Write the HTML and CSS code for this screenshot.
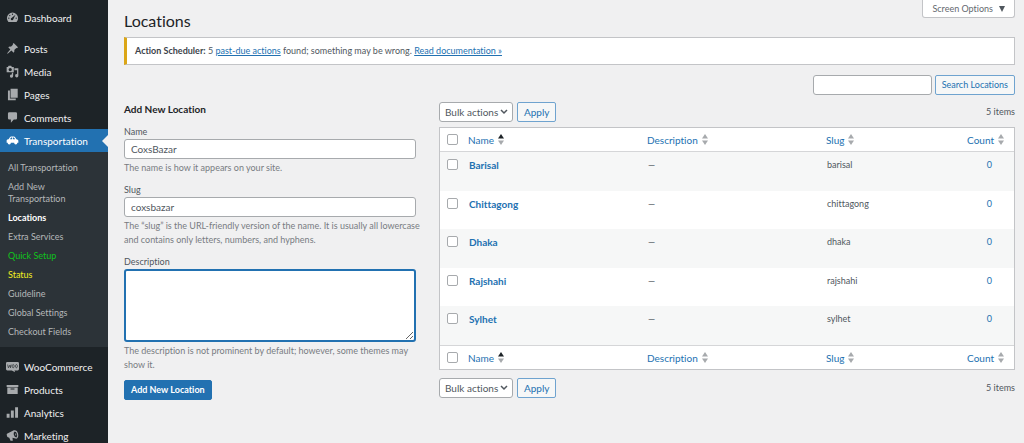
FILE: index.html
```html
<!DOCTYPE html>
<html lang="en">
<head>
<meta charset="utf-8">
<title>Locations</title>
<link rel="stylesheet" href="styles.css">
</head>
<body>
<svg class="defs" aria-hidden="true">
  <symbol id="sort" viewBox="0 0 6 11"><path d="M3 0 6 4.500H0z"/><path d="M0 6.500H6L3 11z"/></symbol>
  <symbol id="sort-asc" viewBox="0 0 6 11"><path fill="#1d2327" d="M3 0 6 4.500H0z"/><path d="M0 6.500H6L3 11z"/></symbol>
</svg>
<div class="layout">
  <nav class="sidebar" aria-label="Main menu">
    <ul class="menu">
      <li><a class="item" href="#"><svg class="icon" viewBox="0 0 20 20"><path fill-rule="evenodd" d="M3.800 17a8.600 8.600 0 1 1 12.400 0zM10 4a1 1 0 1 0 0 2 1 1 0 0 0 0-2zM5.800 6a1 1 0 1 0 0 2 1 1 0 0 0 0-2zm8.800-.3L9 10.300a2 2 0 1 0 2.300 2.300zM4.300 10a1 1 0 1 0 0 2 1 1 0 0 0 0-2zm11.400 0a1 1 0 1 0 0 2 1 1 0 0 0 0-2z"/></svg>Dashboard</a></li>
      <li class="spaced"><a class="item" href="#"><svg class="icon" viewBox="0 0 20 20"><path d="M10.400 3 11.800 1.600 18.400 8.200 17 9.600l-1.100-.4-3.200 3.200c.5 1.600.2 2.900-.9 4l-3.500-3.500L2.600 18l-.8-.8 4.800-5.600L3.500 8.200c1.100-1.100 2.400-1.400 4-.9l3.200-3.200z"/></svg>Posts</a></li>
      <li><a class="item" href="#"><svg class="icon" viewBox="0 0 20 20"><path fill-rule="evenodd" d="M1 3h2l1-2h4l1 2h3v8H1zm5.500 1.500a2.500 2.500 0 1 0 0 5 2.500 2.500 0 0 0 0-5zM13 5h6v11.500a2.500 2.500 0 1 1-2-2.400V8h-4zM9 12h2v5a2.500 2.500 0 1 1-2-2.400z"/></svg>Media</a></li>
      <li><a class="item" href="#"><svg class="icon" viewBox="0 0 20 20"><path d="M7 1h11v14H7zM3 4h3v12h9v3H3z"/></svg>Pages</a></li>
      <li><a class="item" href="#"><svg class="icon" viewBox="0 0 20 20"><path d="M5 2h10q2 0 2 2v7q0 2-2 2h-3l-4.500 5v-5H5q-2 0-2-2V4q0-2 2-2z"/></svg>Comments</a></li>
      <li>
        <a class="item current" href="#"><svg class="icon" viewBox="0 0 20 20"><path fill-rule="evenodd" d="M1 9.500q.5-1.500 3-1.500l2-3q.6-1 2-1h4q1.400 0 2 1l2 3q2.600.3 3 2v3.500h-1.500a2.500 2.500 0 0 1-5 0h-5a2.500 2.500 0 0 1-5 0H1zM6.200 8h3.300V5.500H8q-.5 0-.8.500zm4.500 0h3.300l-1.200-2q-.3-.5-.8-.5h-1.300z"/></svg>Transportation</a>
        <ul class="submenu">
          <li><a href="#">All Transportation</a></li>
          <li><a href="#">Add New Transportation</a></li>
          <li><a class="active" href="#">Locations</a></li>
          <li><a href="#">Extra Services</a></li>
          <li><a class="setup" href="#">Quick Setup</a></li>
          <li><a class="status" href="#">Status</a></li>
          <li><a href="#">Guideline</a></li>
          <li><a href="#">Global Settings</a></li>
          <li><a href="#">Checkout Fields</a></li>
        </ul>
      </li>
      <li class="spaced"><a class="item" href="#"><svg class="icon" viewBox="0 0 20 20"><path d="M2 3h16q2 0 2 2v9q0 2-2 2h-5l1 3-5-3H2q-2 0-2-2V5q0-2 2-2z"/><path class="woo" d="m2.500 7 1.200 5L6 8l.9 4L8 7m3 0a1.500 2.500 0 1 0 .1 0zm5 0a1.500 2.500 0 1 0 .1 0z"/></svg>WooCommerce</a></li>
      <li><a class="item" href="#"><svg class="icon" viewBox="0 0 20 20"><path fill-rule="evenodd" d="M1 3h18v3H1zM2 7h16v10H2zm5 1.500V10h6V8.500z"/></svg>Products</a></li>
      <li><a class="item" href="#"><svg class="icon" viewBox="0 0 20 20"><path d="M1 12h4.500v6H1zM7.500 7H12v11H7.500zM14 2h4.500v16H14z"/></svg>Analytics</a></li>
      <li><a class="item" href="#"><svg class="icon" viewBox="0 0 20 20"><path fill-rule="evenodd" d="M1 9q0-2 2-2.500L12 2q5-1 6.500 5T16 15l-6-1.500.5 4.500H7l-2-4.500Q1 13 1 9zm12.500-5Q11 5 12 9t4 4q2-1 1-5t-3.500-4zm.3 3q1.800 0 2 1.500T15 10.500z"/></svg>Marketing</a></li>
    </ul>
  </nav>

  <main class="content">
    <header class="top">
      <h1>Locations</h1>
      <button class="screen-options" type="button">Screen Options <svg class="caret" viewBox="0 0 6 6"><path d="M0 0h6L3 6z"/></svg></button>
    </header>

    <p class="notice"><strong>Action Scheduler:</strong> 5 <a href="#">past-due actions</a> found; something may be wrong. <a href="#">Read documentation »</a></p>

    <form class="search">
      <input class="field" type="search" aria-label="Search Locations">
      <button class="button small" type="button">Search Locations</button>
    </form>

    <div class="columns">
      <form class="add-form">
        <h2>Add New Location</h2>
        <div class="group">
          <label for="name">Name</label>
          <input class="field" id="name" type="text" value="CoxsBazar">
          <p>The name is how it appears on your site.</p>
        </div>
        <div class="group">
          <label for="slug">Slug</label>
          <input class="field" id="slug" type="text" value="coxsbazar">
          <p>The “slug” is the URL-friendly version of the name. It is usually all lowercase and contains only letters, numbers, and hyphens.</p>
        </div>
        <div class="group">
          <label for="description">Description</label>
          <textarea class="field focused" id="description"></textarea>
          <p>The description is not prominent by default; however, some themes may show it.</p>
        </div>
        <button class="button primary" type="button">Add New Location</button>
      </form>

      <section class="list">
        <div class="tablenav">
          <select aria-label="Bulk actions"><option>Bulk actions</option></select>
          <button class="button" type="button">Apply</button>
          <span class="total">5 items</span>
        </div>
        <table>
          <thead>
            <tr>
              <td class="check"><input type="checkbox" aria-label="Select all"></td>
              <th class="name"><a href="#">Name<svg class="sort"><use href="#sort-asc"/></svg></a></th>
              <th class="desc"><a href="#">Description<svg class="sort"><use href="#sort"/></svg></a></th>
              <th class="slug"><a href="#">Slug<svg class="sort"><use href="#sort"/></svg></a></th>
              <th class="count"><a href="#">Count<svg class="sort"><use href="#sort"/></svg></a></th>
            </tr>
          </thead>
          <tbody>
            <tr><td class="check"><input type="checkbox" aria-label="Select Barisal"></td><td><a class="title" href="#">Barisal</a></td><td>—</td><td>barisal</td><td class="count"><a href="#">0</a></td></tr>
            <tr><td class="check"><input type="checkbox" aria-label="Select Chittagong"></td><td><a class="title" href="#">Chittagong</a></td><td>—</td><td>chittagong</td><td class="count"><a href="#">0</a></td></tr>
            <tr><td class="check"><input type="checkbox" aria-label="Select Dhaka"></td><td><a class="title" href="#">Dhaka</a></td><td>—</td><td>dhaka</td><td class="count"><a href="#">0</a></td></tr>
            <tr><td class="check"><input type="checkbox" aria-label="Select Rajshahi"></td><td><a class="title" href="#">Rajshahi</a></td><td>—</td><td>rajshahi</td><td class="count"><a href="#">0</a></td></tr>
            <tr><td class="check"><input type="checkbox" aria-label="Select Sylhet"></td><td><a class="title" href="#">Sylhet</a></td><td>—</td><td>sylhet</td><td class="count"><a href="#">0</a></td></tr>
          </tbody>
          <tfoot>
            <tr>
              <td class="check"><input type="checkbox" aria-label="Select all"></td>
              <th><a href="#">Name<svg class="sort"><use href="#sort-asc"/></svg></a></th>
              <th><a href="#">Description<svg class="sort"><use href="#sort"/></svg></a></th>
              <th><a href="#">Slug<svg class="sort"><use href="#sort"/></svg></a></th>
              <th class="count"><a href="#">Count<svg class="sort"><use href="#sort"/></svg></a></th>
            </tr>
          </tfoot>
        </table>
        <div class="tablenav">
          <select aria-label="Bulk actions"><option>Bulk actions</option></select>
          <button class="button" type="button">Apply</button>
          <span class="total">5 items</span>
        </div>
      </section>
    </div>
  </main>
</div>
</body>
</html>
```
FILE: styles.css
```css
* { box-sizing: border-box; }
body {
  margin: 0;
  background: #f0f0f1;
  color: #50575e;
  font: 10px/14px Lato, "Open Sans", sans-serif;
  font-variant-ligatures: none;
}
h1, h2, p, ul { margin: 0; padding: 0; }
ul { list-style: none; }
a { color: #2271b1; }
input, select, textarea, button { font: inherit; color: inherit; margin: 0; }
.defs { display: none; }

.layout { display: flex; height: 100vh; overflow: hidden; }

/* Sidebar */
.sidebar { flex: 0 0 108px; background: #1d2327; }
.menu { padding-top: 6px; }
.spaced { margin-top: 8px; }
.item {
  display: flex;
  align-items: center;
  gap: 5px;
  height: 23px;
  padding-left: 6px;
  color: #f0f0f1;
  font-size: 10px;
  text-decoration: none;
}
.icon { width: 13px; height: 13px; fill: #a7aaad; }
.woo { fill: none; stroke: #1d2327; stroke-width: 1; }
.current { position: relative; background: #2271b1; color: #fff; }
.current .icon { fill: #fff; }
.current::after {
  content: "";
  position: absolute;
  right: 0;
  top: 6px;
  border: 6px solid transparent;
  border-left: 0;
  border-right-color: #f0f0f1;
}
.submenu { background: #2c3338; padding: 6px 0; }
.submenu a {
  display: block;
  padding: 4px 8px 3px;
  color: #b5b8ba;
  font-size: 9px;
  line-height: 12px;
  text-decoration: none;
}
.submenu .active { color: #fff; font-weight: 700; }
.submenu .setup { color: #10c41c; }
.submenu .status { color: #f2ee22; }

/* Content */
.content { flex: 1; min-width: 0; padding: 0 9px 0 16px; }
.top { display: flex; justify-content: space-between; align-items: flex-start; height: 37px; }
h1 { padding-top: 10px; color: #1d2327; font-size: 16px; line-height: 22px; font-weight: 400; }
.screen-options {
  display: flex;
  align-items: center;
  gap: 6px;
  height: 18px;
  padding: 0 9px;
  border: 1px solid #c3c4c7;
  border-top: 0;
  border-radius: 0 0 3px 3px;
  background: #fff;
  color: #646970;
  font-size: 9px;
}
.caret { width: 6px; height: 6px; fill: #50575e; }
.notice {
  padding: 6px 8px;
  border: 1px solid #c3c4c7;
  border-left: 3px solid #dba617;
  background: #fff;
  font-size: 9px;
}
.notice strong { color: #3c434a; font-weight: 700; }
.search { display: flex; justify-content: flex-end; gap: 3px; margin-top: 10px; }
.search .field { width: 119px; }

.field {
  display: block;
  width: 100%;
  height: 20px;
  padding: 0 6px;
  border: 1px solid #a7aaad;
  border-radius: 3px;
  background: #fff;
  outline: 0;
}
.button {
  height: 20px;
  padding: 0 6px;
  border: 1px solid #6fa3cf;
  border-radius: 2px;
  background: #f6f7f7;
  color: #2271b1;
  white-space: nowrap;
}
.small { font-size: 9px; }
.primary { border-color: #2271b1; background: #2271b1; color: #fff; font-size: 9px; font-weight: 700; }

.columns { display: flex; gap: 23px; margin-top: 7px; }
.add-form { flex: 0 1 292px; }
h2 { color: #1d2327; font-size: 10px; line-height: 14px; font-weight: 700; }
.group { display: flow-root; margin-bottom: 8px; font-size: 9px; }
h2 + .group { margin-top: 9px; }
.group label { display: block; }
.group .field { font-size: 10px; }
.group p { margin: 2px -6px 0 0; color: #787c82; }
.group textarea { height: 73px; resize: vertical; }
.group .focused { border: 2px solid #2271b1; }

/* Locations table */
.list { flex: 1; min-width: 0; }
.tablenav { display: flex; align-items: center; gap: 4px; }
select {
  width: 74px;
  height: 20px;
  padding: 0 5px;
  border: 1px solid #a7aaad;
  border-radius: 3px;
  appearance: none;
  background: #fff url("data:image/svg+xml,%3Csvg xmlns='http://www.w3.org/2000/svg' viewBox='0 0 8 6'%3E%3Cpath d='m1 1 3 3 3-3' fill='none' stroke='%2350575e' stroke-width='1.500'/%3E%3C/svg%3E") no-repeat right 4px center / 8px 6px;
}
.total { margin-left: auto; font-size: 9px; }
table {
  width: 100%;
  margin: 5px 0 8px;
  border: 1px solid #c3c4c7;
  border-spacing: 0;
  table-layout: fixed;
  background: #fff;
}
th, td { padding: 0 6px; text-align: left; font-weight: 400; }
th a, td a { text-decoration: none; }
thead tr, tfoot tr { height: 24px; }
thead th, thead td { border-bottom: 1px solid #d5d6d8; }
tfoot th, tfoot td { border-top: 1px solid #d5d6d8; }
tbody tr { height: 38px; }
tbody tr:nth-child(odd) { height: 39px; background: #f6f7f7; }
tbody td { padding: 6px 7px; vertical-align: top; font-size: 9px; }
.title { font-size: 10px; font-weight: 700; }
.check, tbody .check { width: 22px; padding: 0 0 0 7px; }
tbody .check { padding-top: 7px; }
.desc, .name { width: 179px; }
.count { width: 75px; text-align: right; padding-right: 10px; }
tbody .count { padding-right: 22px; }
.sort { width: 6px; height: 11px; margin-left: 4px; fill: #a7aaad; vertical-align: -1px; }
input[type="checkbox"] {
  display: block;
  width: 11px;
  height: 11px;
  border: 1px solid #a7aaad;
  border-radius: 2px;
  appearance: none;
  background: #fff;
}
```
